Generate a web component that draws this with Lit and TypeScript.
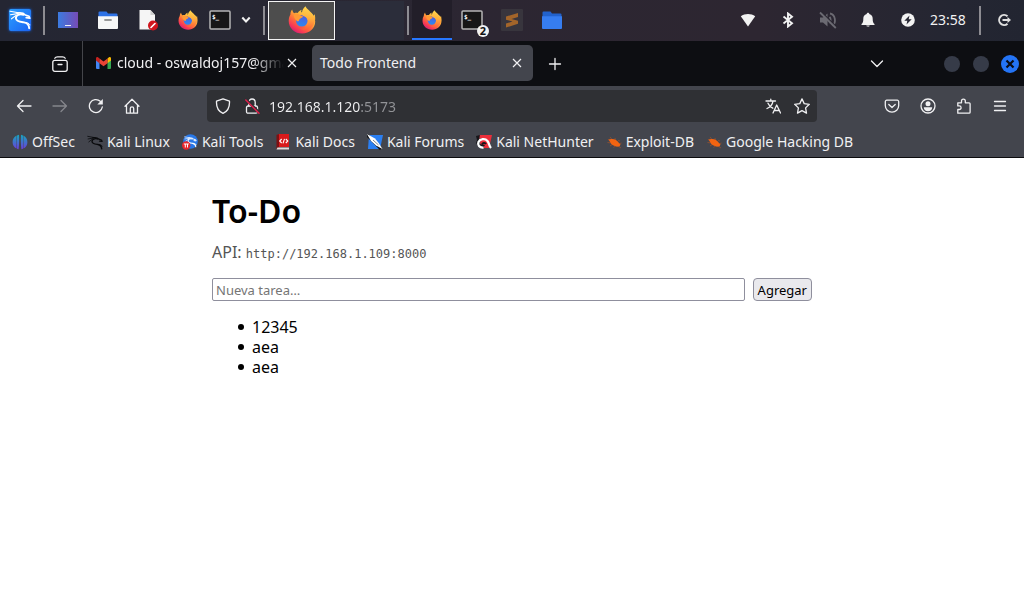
import { LitElement, html, css, svg } from "lit";
import { customElement } from "lit/decorators.js";

const firefox = (size: number) => html`
  <svg width=${size} height=${size} viewBox="0 0 28 28" aria-hidden="true">
    <defs>
      <linearGradient id="flame" x1="0.85" y1="0.1" x2="0.2" y2="0.95">
        <stop offset="0.05" stop-color="#ffe14a" />
        <stop offset="0.35" stop-color="#ffab36" />
        <stop offset="0.6" stop-color="#ff6a3c" />
        <stop offset="0.85" stop-color="#f5325a" />
        <stop offset="1" stop-color="#c4237a" />
      </linearGradient>
      <linearGradient id="tail" x1="0.6" y1="0" x2="0.5" y2="1">
        <stop offset="0" stop-color="#ffd94f" />
        <stop offset="0.5" stop-color="#ffb03c" />
        <stop offset="1" stop-color="#ff6139" />
      </linearGradient>
      <linearGradient id="globe" x1="0.6" y1="0" x2="0.4" y2="1">
        <stop offset="0" stop-color="#4f5be0" />
        <stop offset="1" stop-color="#2c8af0" />
      </linearGradient>
    </defs>
    <path fill="url(#flame)" d="M4.200 3.600c.2 1.500.9 2.800 1.900 3.700 1-.5 2.300-.6 3.600-.3 1-1.600 2.500-2.700 4-3.200-.5.800-.7 1.700-.5 2.500h5.300L24 7.500c1.700 2 3.200 4.700 3.200 8.100C27.200 22.300 21.500 27.500 14.200 27.500 6.700 27.500.7 22 .7 14.900c0-2.400.6-4.600 1.700-6.400C2.400 6.800 3 5 4.200 3.600z" />
    <circle cx="13.800" cy="14.800" r="5.800" fill="url(#globe)" />
    <path fill="#ff9a35" d="M5.600 9.200c2-1.500 4.600-1.500 6.300-.1 1 .8 2.600.8 3 1.300.3.900-2.500 1.800-3.300 2.500-.4 1-.3 2.100-1.600 2.600-1.800-.5-3.600-2.700-4.400-6.300z" />
    <path fill="url(#tail)" d="M17.600.3c1 3.200 6 5.100 7.500 9.500.9-.3 1.400-1.200 1.500-1.800 1.300 4.600.6 9.400-2.400 12.800-3 3.200-8.800 4.200-12.600 1.600 4.200.7 8-1.200 8.600-5 .5-3.400-1.600-6.500-4.800-7.400-1.300-.5-1.700-1.600-1.500-3.200.3-2.700 1.800-5.100 3.700-6.500z" />
  </svg>`;

const dragon = (color: string) => svg`
  <g fill="none" stroke=${color} stroke-linecap="round" stroke-linejoin="round">
    <path stroke-width="1.100" d="M2 3.200l8.500 1.600M2.500 6.800l7-1.200M3.500 10.800l4.500-3.400" />
    <path stroke-width="1.700" d="M9 5.200c3-.6 6.500-.2 8.300 1.800l3.700 1.200.8 2-3.600-.5" />
    <path stroke-width="1.900" d="M15.500 6.800c-4-1.200-7.700.3-7.600 3.500.2 3.300 4.500 3.600 8 4.100 3.300.6 5 2.400 5.300 5.800" />
    <path stroke-width="1" d="M16 14.400c2.800-.3 5 .7 6 2.400" />
  </g>`;

const terminal = html`
  <svg width="22" height="20" viewBox="0 0 22 20" aria-hidden="true">
    <rect x="1" y="1" width="20" height="18" rx="1" fill="#171717" stroke="#b5b5b5" stroke-width="1.500" />
    <text x="3" y="9" font-family="DejaVu Sans Mono, monospace" font-weight="700" font-size="6" fill="#fff">$_</text>
  </svg>`;

const folder = (body: string, flap: string, paper: boolean) => html`
  <svg width="22" height="20" viewBox="0 0 22 20" aria-hidden="true">
    <path fill=${flap} d="M1.500 2.500a1 1 0 0 1 1-1h7l1.500 2h8.500a1 1 0 0 1 1 1V10h-19z" />
    <path fill=${body} d="M1 6.200h20V18a1 1 0 0 1-1 1H2a1 1 0 0 1-1-1z" />
    ${paper ? svg`<path stroke="#999" stroke-width="1.800" stroke-linecap="round" d="M8 10h6" />` : null}
  </svg>`;

const cross = html`
  <svg width="12" height="12" viewBox="0 0 12 12" fill="none" stroke="currentColor" stroke-width="1.200" aria-hidden="true">
    <path d="M2 2l8 8M10 2l-8 8" />
  </svg>`;

const line = (body: unknown, size = 16) => html`
  <svg width=${size} height=${size} viewBox="0 0 16 16" fill="none" stroke="currentColor" stroke-width="1.300"
    stroke-linecap="round" stroke-linejoin="round" aria-hidden="true">${body}</svg>`;

const bug = html`
  <svg width="16" height="16" viewBox="0 0 16 16" aria-hidden="true">
    <path stroke="#95512f" stroke-width=".8" fill="none" d="M2 5.500l3 1.500M4 3l2.500 3M9 4l.5 2.500M1.500 8.500l4 .5M4 12l3-2M7.500 13.500l2.500-2M12 6.500l2 .5M15 14l-3-2M14 9.500l1.500-.5" />
    <path fill="#f26411" d="M2.600 5.400l2.600-.4C8 4.500 11.200 6.200 12.800 8.700l1.700 1.500-.8 2-2.700.5C8.300 12.200 5.200 10.700 4.200 8.300z" />
  </svg>`;

const bookmarks = [
  { name: "OffSec", icon: html`
    <svg width="16" height="16" viewBox="0 0 16 16" aria-hidden="true">
      <defs><linearGradient id="off" x1="0" y1="0" x2="0" y2="1"><stop offset="0" stop-color="#16a5bd" /><stop offset="1" stop-color="#6b3ddc" /></linearGradient></defs>
      <path fill="url(#off)" d="M4.600 1.600v13C2 13.500.6 11 .6 8.200S2 2.800 4.600 1.600zM7 .8C7.300 5 7.300 10 6.600 15.300L5 14.700V1.400zM9 .8c-.3 4.200-.3 9.200.4 14.500l1.600-.6V1.400zM11.400 1.600c2.600 1.200 4 3.800 4 6.600s-1.400 5.300-4 6.400z" />
    </svg>` },
  { name: "Kali Linux", icon: html`<svg width="16" height="16" viewBox="1 1 22 20" aria-hidden="true">${dragon("#090a0c")}</svg>` },
  { name: "Kali Tools", icon: html`
    <svg width="16" height="16" viewBox="0 0 16 16" aria-hidden="true">
      <circle cx="8.500" cy="7.500" r="7.300" fill="#2777e8" />
      <g transform="translate(1.500 1) scale(.58)">${dragon("#fff")}</g>
      <circle cx="4.200" cy="11.500" r="4.200" fill="#e8262d" />
      <path stroke="#fff" stroke-width="1" fill="none" d="M1.800 10h5M3.300 10v3.500M5.500 10v3.500" />
    </svg>` },
  { name: "Kali Docs", icon: html`
    <svg width="16" height="16" viewBox="0 0 16 16" aria-hidden="true">
      <path fill="#d91a1c" d="M3 0h11v13H3z" /><path fill="#7d1013" d="M1.500 1L4 0v13.500L1.500 15z" />
      <path fill="#e3dada" d="M2.500 13.500H14V15.500H1.500z" />
      <path d="M6.700 5l-2 2 2 2M10.800 5l2 2-2 2M9.500 4.800L8 9.300" fill="none" stroke="#fff" stroke-width="1.100" />
    </svg>` },
  { name: "Kali Forums", icon: html`
    <svg width="16" height="16" viewBox="0 0 16 16" aria-hidden="true">
      <path fill="#2b7ff2" d="M2 1h14l-3 14H1z" /><path fill="none" stroke="#101216" stroke-width="3" d="M0 1l14 14" />
      <path fill="#fff" d="M0 0l8 4.500 4 5L15.500 15 9 11.500 4 7z" /><path stroke="#555" stroke-width=".7" d="M6 6l5.500 5" />
    </svg>` },
  { name: "Kali NetHunter", icon: html`
    <svg width="16" height="16" viewBox="0 0 16 16" aria-hidden="true">
      <path fill="#ec2e3a" d="M3 1h13l-3 13H5z" />
      <path fill="#15161a" d="M0 2l4-1-1 4 3-1-3 6 6 1-2 3H4L0 9l1-3z" />
      <path fill="none" stroke="#fff" stroke-width="2.300" d="M7.500 13.500C3.500 14 1.200 11 2.500 8 4 4.800 9 4 11.500 7c1.800 2.200 1.500 5 3.500 7" />
      <path fill="none" stroke="#15161a" stroke-width="2" d="M6 10.500c1-2 3-2 4-.5" />
    </svg>` },
  { name: "Exploit-DB", icon: bug },
  { name: "Google Hacking DB", icon: bug },
];

const tray = [
  { label: "Network", icon: html`<svg width="16" height="16" viewBox="0 0 16 16"><path fill="#f2f2f2" d="M.8 4.200C4.800 1.200 11.200 1.200 15.200 4.200L8 14.500z" /></svg>` },
  { label: "Bluetooth", icon: html`<svg width="16" height="16" viewBox="0 0 16 16" fill="none" stroke="#f2f2f2" stroke-width="1.900"><path d="M3.500 4.500l8.500 6.700-4 3.300v-13l4 3.300-8.500 6.700" /></svg>` },
  { label: "Volume", icon: html`<svg width="18" height="18" viewBox="0 0 18 18" fill="none" stroke="#6b6a72" stroke-width="1.800"><path fill="#6b6a72" stroke="none" d="M1 6.500h3l4.500-4v13L4 11.500H1z" /><path d="M10.500 6c1.500 1.500 1.500 4.500 0 6M11 2.500c5.500 1 6.500 9 2.500 12.300" /><path stroke="#292631" stroke-width="1.500" d="M2 .5l15.500 15.500" /><path d="M1 1.500l15.800 15.500" /></svg>` },
  { label: "Notifications", icon: html`<svg width="16" height="16" viewBox="0 0 16 16"><path fill="#f2f2f2" d="M8 .8c.9 0 1.300.6 1.300 1.300 2.300.6 3.400 2.400 3.400 4.700 0 3 .4 4.200 1.800 5.200v1h-13v-1c1.400-1 1.800-2.200 1.800-5.200 0-2.300 1.100-4.100 3.400-4.700C6.700 1.400 7.100.8 8 .8zM6.300 13.500h3.400c-.3 1.600-3.100 1.600-3.400 0z" /></svg>` },
  { label: "Power", icon: html`<svg width="16" height="16" viewBox="0 0 16 16"><circle cx="8" cy="8" r="6.800" fill="#f2f2f2" /><path fill="#262632" d="M9.500 3.500L4.300 8.800h3L6.500 12.500l5.200-5.300h-3z" /></svg>` },
];

@customElement("desktop-panel")
export class DesktopPanel extends LitElement {
  static styles = css`
    :host { display: block; font-family: "Noto Sans", sans-serif; }
    .panel { display: flex; align-items: stretch; height: 41px; background: linear-gradient(90deg, #242633 0, #272733 24%, #2c2632 46%, #2d2631 74%, #242632 94%, #222531 100%); }
    button { display: flex; align-items: center; justify-content: center; flex: none; width: 40px; margin: 0; padding: 0 0 1px; border: 0; background: none; color: #f2f2f2; font: inherit; }
    .narrow { width: 24px; }
    .menu { width: 28px; }
    .sep { flex: none; width: 2px; height: 29px; margin: 6px 3px; background: #8d8c92; }
    .desk { width: 68px; height: 39px; margin: 1px 0; background: #2b2d3a; }
    .desk.current { width: 67px; margin-right: 1px; background: #4d4d4d; border: 1px solid #f4f4f4; }
    .task { position: relative; }
    .task.active { height: 40px; background: #221e29; box-shadow: inset 0 -2px #2777ff; }
    .count { position: absolute; left: 25px; top: 25px; width: 12px; height: 12px; border-radius: 6px; background: #f2f2f2; color: #111; font-size: 11px; font-weight: 700; line-height: 12px; text-align: center; }
    .space { flex: 1; }
    .clock { flex: none; box-sizing: border-box; width: 48px; padding-left: 2px; font-size: 14px; line-height: 40px; color: #f2f2f2; }
  `;

  render() {
    return html`
      <div class="panel">
        <button aria-label="Applications">
          <svg width="30" height="30" viewBox="-3 -3 30 30">
            <defs><filter id="glow" x="-30%" y="-30%" width="160%" height="160%"><feGaussianBlur stdDeviation="1.500" /></filter>
            <linearGradient id="kali" x1="0" y1="0" x2="1" y2="1"><stop offset="0" stop-color="#2ca0ff" /><stop offset="1" stop-color="#1a62f2" /></linearGradient></defs>
            <rect x="1" y="1" width="22" height="22" rx="2" fill="#1663e8" filter="url(#glow)" />
            <rect x="1" y="1" width="22" height="22" rx="2" fill="url(#kali)" />
            ${dragon("#fff")}
          </svg>
        </button>
        <span class="sep"></span>
        <button aria-label="Show desktop">
          <svg width="20" height="16" viewBox="0 0 20 16">
            <defs><linearGradient id="wall" x1="0" y1="0" x2="1" y2="0"><stop offset="0" stop-color="#3b7be0" /><stop offset="1" stop-color="#764bb5" /></linearGradient></defs>
            <path fill="url(#wall)" d="M0 0h20v16H0z" /><path fill="#f0f0f4" d="M7 13h6v1H7z" />
          </svg>
        </button>
        <button aria-label="File manager">${folder("#f7f7f7", "#2e72e6", true)}</button>
        <button aria-label="Text editor">
          <svg width="22" height="22" viewBox="0 0 22 22">
            <path fill="#f5f5f5" d="M2.500 1h11l4.500 5v14.500H2.500z" /><path fill="#cfcfcf" d="M13.500 1l4.500 5h-4.500z" />
            <circle cx="16" cy="16.500" r="5" fill="#d0161e" /><path stroke="#fff" stroke-width="1.600" stroke-linecap="round" d="M14 18.500l4-4" />
          </svg>
        </button>
        <button aria-label="Firefox">${firefox(20)}</button>
        <button class="narrow" aria-label="Terminal">${terminal}</button>
        <button class="menu" aria-label="More launchers">
          <svg width="10" height="8" viewBox="0 0 10 8" fill="none" stroke="#f2f2f2" stroke-width="2"><path d="M1.300 1.500L5 5.500l3.700-4" /></svg>
        </button>
        <span class="sep"></span>
        <button class="desk current" aria-label="Workspace 1">${firefox(28)}</button>
        <button class="desk" aria-label="Workspace 2"></button>
        <span class="sep"></span>
        <button class="task active" aria-label="Firefox window">${firefox(20)}</button>
        <button class="task" aria-label="Terminal windows">${terminal}<span class="count">2</span></button>
        <button class="task" aria-label="Sublime Text">
          <svg width="22" height="22" viewBox="0 0 22 22">
            <rect width="22" height="22" rx="1" fill="#38353d" />
            <path fill="#a3652a" d="M5 7.500L17 4v4l-6.500 2L17 11.800v3L5 18.500v-4l6.500-2L5 10.800z" />
          </svg>
        </button>
        <button class="task" aria-label="Files">${folder("#367df0", "#2262cc", false)}</button>
        <span class="space"></span>
        ${tray.map((t) => html`<button aria-label=${t.label}>${t.icon}</button>`)}
        <time class="clock">23:58</time>
        <span class="sep"></span>
        <button aria-label="Log out">
          <svg width="16" height="16" viewBox="0 0 16 16" fill="none" stroke="#e0e0e0" stroke-width="2"><path d="M11.500 4.300A5 5 0 1 0 11.500 11.700M6.500 8h6" /><path fill="#e0e0e0" stroke="none" d="M11.500 5l3.500 3-3.500 3z" /></svg>
        </button>
      </div>`;
  }
}

@customElement("browser-chrome")
export class BrowserChrome extends LitElement {
  static styles = css`
    :host { display: block; font-family: "Noto Sans", sans-serif; font-size: 14px; color: #f0f0f2; }
    button { display: flex; align-items: center; justify-content: center; flex: none; margin: 0; padding: 0; border: 0; background: none; color: inherit; font: inherit; }
    svg { flex: none; display: block; }
    .tabs { display: flex; align-items: center; height: 45px; background: #0d0e12; }
    .view { box-sizing: border-box; width: 83px; height: 45px; padding-left: 38px; border-right: 1px solid #44454a; }
    .tab { display: flex; align-items: center; flex: 0 1 221px; min-width: 0; box-sizing: border-box; height: 36px; margin: 0 0 1px; padding: 0 8px; border-radius: 5px; }
    .tab.plain { flex-basis: 217px; margin-left: 4px; margin-right: 4px; padding: 0 4px 0 9px; }
    .tab.current { margin-left: 4px; background: #43454d; }
    .title { flex: 1; min-width: 0; white-space: nowrap; line-height: 20px; }
    .plain .title { margin-left: 6px; mask-image: linear-gradient(90deg, #000 calc(100% - 32px), transparent); }
    .close { width: 16px; height: 20px; }
    .add { width: 43px; height: 36px; }
    .space { flex: 1; }
    .list { width: 32px; height: 36px; margin-right: 51px; }
    .win { width: 16px; height: 16px; margin-right: 13px; border-radius: 8px; background: #363b48; }
    .win.shut { width: 18px; height: 18px; margin: 0 5px 0 -1px; border-radius: 9px; background: #2474f5; color: #0b0d14; }
    .nav { display: flex; align-items: center; height: 40px; padding: 0 6px; background: #43454d; }
    .tool { width: 36px; height: 36px; }
    .tool.off { color: #85868c; }
    .address { display: flex; align-items: center; flex: 0 1 610px; min-width: 0; height: 32px; margin: 0 auto 0 57px; border-radius: 4px; background: #2f3034; }
    .address button { width: 28px; height: 32px; }
    .address .first { width: 32px; }
    .address .last { width: 30px; }
    .url { flex: 1; min-width: 0; border: 0; outline: 0; margin: 0 0 0 2px; padding: 0; height: 32px; font: inherit; background: linear-gradient(90deg, #f0f0f2 91px, #929397 91px); background-clip: text; color: transparent; }
    .marks { display: flex; align-items: center; height: 31px; padding: 0 0 0 12px; gap: 12px; background: #43454d; border-bottom: 1px solid #0c0c0e; }
    .marks a { display: flex; align-items: center; gap: 4px; color: inherit; text-decoration: none; white-space: nowrap; line-height: 20px; }
  `;

  render() {
    return html`
      <div class="tabs">
        <button class="view" aria-label="Firefox View">
          ${line(svg`<rect x=".8" y="4.300" width="14.400" height="11" rx="2" /><path d="M2.800 2.300C3.500 1 4.500.8 5.500.8h5c1 0 2 .2 2.700 1.500M6 8.500h4" />`)}
        </button>
        <div class="tab plain">
          <svg width="15" height="12" viewBox="0 0 15 12" aria-hidden="true">
            <path fill="#4285f4" d="M0 2v9a1 1 0 0 0 1 1h2.500V4z" /><path fill="#34a853" d="M15 2v9a1 1 0 0 1-1 1h-2.500V4z" />
            <path fill="#fbbc04" d="M11.500 1.500L13 .3c1-.6 2 .2 2 1.200v2l-3.500 2.700z" /><path fill="#c5221f" d="M0 1.500C0 .5 1 -.3 2 .3l1.500 1.200v4.700L0 3.500z" />
            <path fill="#ea4335" d="M3.500 1.500l4 3 4-3v4.700l-4 3-4-3z" />
          </svg>
          <span class="title">cloud - oswaldoj157@gma</span>
          <button class="close" aria-label="Close tab">${cross}</button>
        </div>
        <div class="tab current">
          <span class="title">Todo Frontend</span>
          <button class="close" aria-label="Close tab">${cross}</button>
        </div>
        <button class="add" aria-label="New tab">${line(svg`<path d="M8 2.500v11M2.500 8h11" />`)}</button>
        <span class="space"></span>
        <button class="list" aria-label="List all tabs">${line(svg`<path d="M2.500 5L8 10.500 13.500 5" />`)}</button>
        <button class="win" aria-label="Minimize"></button>
        <button class="win" aria-label="Maximize"></button>
        <button class="win shut" aria-label="Close"><svg width="10" height="10" viewBox="0 0 10 10" stroke="currentColor" stroke-width="2.200"><path d="M1.500 1.500l7 7M8.500 1.500l-7 7" /></svg></button>
      </div>
      <div class="nav">
        <button class="tool" aria-label="Back">${line(svg`<path d="M15 8H1.500M7 2.500L1.500 8 7 13.500" />`)}</button>
        <button class="tool off" aria-label="Forward">${line(svg`<path d="M1 8h13.500M9 2.500L14.500 8 9 13.500" />`)}</button>
        <button class="tool" aria-label="Reload">${line(svg`<path d="M14.300 9A6.500 6.500 0 1 1 12.300 3.300" /><path fill="currentColor" stroke="none" d="M14.800 1v5.500H9.300z" />`)}</button>
        <button class="tool" aria-label="Home">${line(svg`<path d="M1 8.300l7-7 7 7M2.500 7v8.200h11V7M6.300 15v-4.500a1.700 1.700 0 0 1 3.400 0V15" />`)}</button>
        <div class="address">
          <button class="first" aria-label="Tracking protection">${line(svg`<path d="M8 .8l6.500 2.400c.3 5.500-1.500 10-6.500 12.200C3 13.200 1.200 8.700 1.500 3.200z" />`)}</button>
          <button class="lock" aria-label="Connection not secure">${line(svg`<rect x="1.500" y="8" width="11" height="7.200" rx="1.500" /><path d="M3.800 8V4.200a3.200 3.200 0 0 1 6.400 0V8" /><path stroke="#2f3034" stroke-width="3" d="M1 1.500l13.500 13.500" /><path stroke="#e0204c" stroke-width="1.500" d="M.8 2L14 15.300" />`)}</button>
          <input class="url" aria-label="Address" .value=${"192.168.1.120:5173"} />
          <button aria-label="Translate">${line(svg`<path d="M1 3h9.500M5.800 1.200V3M2 10.500c3-1.200 5.500-4 6-7.300M3 5.200c1 2.500 2.800 4 4.800 5M8 15l3.700-8 3.800 8M9.300 12.500h4.800" />`)}</button>
          <button class="last" aria-label="Bookmark this page">${line(svg`<path d="M8 .9l2.200 4.700 5.100.7-3.700 3.600.9 5.200L8 12.600l-4.500 2.500.9-5.200L.7 6.300l5.100-.7z" />`)}</button>
        </div>
        <button class="tool" aria-label="Save to Pocket">${line(svg`<path d="M2.800 2.200h10.400a1.500 1.500 0 0 1 1.500 1.500V7.500a6.700 6.700 0 0 1-13.400 0V3.700a1.500 1.500 0 0 1 1.500-1.500zM4.800 6.500L8 9.500l3.200-3" />`)}</button>
        <button class="tool" aria-label="Account">${line(svg`<circle cx="8" cy="8" r="7" /><circle cx="8" cy="5.800" r="2.500" fill="currentColor" stroke="none" /><path fill="currentColor" stroke="none" d="M3.800 9.300h8.400c0 2.500-1.800 4-4.200 4s-4.200-1.500-4.200-4z" />`)}</button>
        <button class="tool" aria-label="Extensions">${line(svg`<path d="M1.800 15.200v-3.700h1.500a1.800 1.800 0 0 0 0-3.600H1.800V4.800H5.500V3a1.900 1.900 0 0 1 3.800 0v1.800h3.800a1 1 0 0 1 1 1v8.400a1 1 0 0 1-1 1z" />`)}</button>
        <button class="tool" aria-label="Menu">${line(svg`<path d="M2.500 3.500h11M2.500 8h11M2.500 12.500h11" />`)}</button>
      </div>
      <nav class="marks">
        ${bookmarks.map((b) => html`<a href="#">${b.icon}<span>${b.name}</span></a>`)}
      </nav>`;
  }
}

@customElement("todo-page")
export class TodoPage extends LitElement {
  static styles = css`
    :host { display: block; box-sizing: border-box; max-width: 600px; margin: 32px auto; font-family: "Noto Sans", sans-serif; font-size: 16px; line-height: 20px; color: #000; }
    h1 { margin: 0; font-size: 32px; font-weight: 600; line-height: 42px; }
    .api { margin: 10px 0 14px; color: #555; }
    code { font-family: "DejaVu Sans Mono", monospace; font-size: 12px; }
    form { display: flex; gap: 8px; margin: 0 0 16px; }
    input { flex: 1; min-width: 0; box-sizing: border-box; height: 23px; margin: 0; padding: 1px 3px; border: 1px solid #8f8f9d; border-radius: 2px; background: #fff; font: 13px "Noto Sans", sans-serif; }
    input::placeholder { color: #757575; }
    button { box-sizing: border-box; height: 23px; margin: 0; padding: 0 4px; border: 1px solid #8f8f9d; border-radius: 4px; background: #e9e9ed; color: #000; font: 13px "Noto Sans", sans-serif; }
    ul { margin: 0; padding: 0 0 0 26px; list-style: none; }
    li { display: flex; align-items: center; gap: 8px; }
    li::before { content: ""; width: 6px; height: 6px; border-radius: 3px; background: #000; }
  `;

  render() {
    return html`
      <h1>To-Do</h1>
      <p class="api">API: <code>http://192.168.1.109:8000</code></p>
      <form @submit=${(e: Event) => e.preventDefault()}>
        <input type="text" aria-label="Nueva tarea" placeholder="Nueva tarea…" />
        <button>Agregar</button>
      </form>
      <ul>
        ${["12345", "aea", "aea"].map((t) => html`<li>${t}</li>`)}
      </ul>`;
  }
}

@customElement("app-root")
export class AppRoot extends LitElement {
  static styles = css`
    :host { display: block; min-height: 100vh; background: #fff; }
  `;

  render() {
    return html`
      <desktop-panel></desktop-panel>
      <browser-chrome></browser-chrome>
      <todo-page></todo-page>`;
  }
}
